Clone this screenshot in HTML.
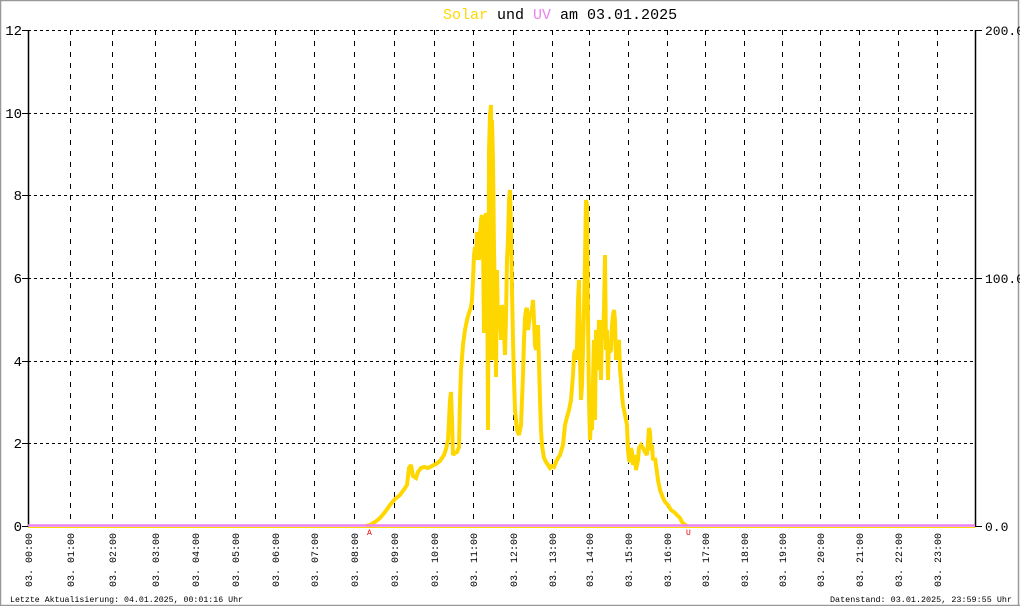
<!DOCTYPE html>
<html><head><meta charset="utf-8"><style>
html,body{margin:0;padding:0;background:#fff;width:1020px;height:606px;overflow:hidden;}
svg{display:block;}
text{font-family:"Liberation Mono",monospace;}
</style></head><body>
<svg width="1020" height="606" viewBox="0 0 1020 606" xmlns="http://www.w3.org/2000/svg">
<rect x="0" y="0" width="1020" height="606" fill="#fff"/>
<path d="M0.5 606V0.5H1018.5V606M0 605.5H1020" stroke="#999" stroke-width="1.5" fill="none"/>
<text x="443" y="19" font-size="15"><tspan fill="#FFD700">Solar</tspan><tspan fill="#000"> und </tspan><tspan fill="#EE82EE">UV</tspan><tspan fill="#000"> am 03.01.2025</tspan></text>
<g stroke="#000" stroke-width="1" stroke-dasharray="3,3" fill="none">
<path d="M28 30.5H975M28 113.5H975M28 195.5H975M28 278.5H975M28 361.5H975M28 443.5H975"/>
</g>
<g stroke="#000" stroke-width="1" stroke-dasharray="5,6" fill="none">
<path d="M70.5 30V526M112.5 30V526M155.5 30V526M195.5 30V526M235.5 30V526M275.5 30V526M314.5 30V526M354.5 30V526M394.5 30V526M434.5 30V526M473.5 30V526M513.5 30V526M552.5 30V526M589.5 30V526M628.5 30V526M667.5 30V526M705.5 30V526M744.5 30V526M782.5 30V526M820.5 30V526M859.5 30V526M898.5 30V526M937.5 30V526"/>
</g>
<path d="M28.5 30V527M975.5 30V527" stroke="#000" stroke-width="1.5"/>
<path d="M22 30.5H28M22 113.5H28M22 195.5H28M22 278.5H28M22 361.5H28M22 443.5H28M22 526.5H28M975 30.5H982M975 278.5H982M975 526.5H982" stroke="#000" stroke-width="1"/>
<g font-size="14" fill="#000" text-anchor="end">
<text x="22" y="35">12</text><text x="22" y="118">10</text><text x="22" y="200">8</text><text x="22" y="283">6</text><text x="22" y="366">4</text><text x="22" y="448">2</text><text x="22" y="531">0</text>
</g>
<g font-size="13" fill="#000">
<text x="985" y="35">200.0</text><text x="985" y="283">100.0</text><text x="985" y="531">0.0</text>
</g>
<path d="M28 527.5H975" stroke="#FFD700" stroke-width="1"/>
<polyline fill="none" stroke="#FFD700" stroke-width="4" stroke-linejoin="miter" stroke-miterlimit="2" points="366,526 370,525 375,522 380,518 385,512 390,505 395,499 400,495 405,488 407,485 409,468 411,465 413,476 416,478 418,472 421,468 424,467 428,468 432,466 436,464 440,461 444,455 446,449 448,440 449,420 450,400 451,392 452,420 453,455 455,453 457,452 459,447 460,400 461,370 463,345 465,330 467,320 469,313 471,307 472,300 473,280 474,255 475,247 476,260 477,232 478,245 479,260 480,235 481,220 482,215 483,240 484,333 485,260 486,213 487,230 488,430 489,150 490,115 491,105 492,360 492,120 493,160 494,250 495,300 496,377 497,270 498,330 499,310 500,306 501,340 502,305 503,315 504,330 505,355 506,317 507,260 508,240 509,200 510,190 511,230 512,290 513,340 514,380 515,410 517,430 519,435 521,425 522,400 523,375 524,340 525,318 526,310 527,308 528,330 530,315 532,310 533,300 534,320 535,345 536,350 538,325 540,400 541,430 542,445 544,458 546,462 548,465 550,468 552,466 554,467 556,462 558,458 560,455 563,445 565,425 567,417 569,410 571,400 573,375 574,355 575,350 576,360 577,345 578,300 579,280 580,360 581,400 582,385 583,350 584,310 585,260 586,200 587,205 588,320 589,400 590,440 591,420 592,430 593,380 594,340 595,420 596,330 597,370 598,350 599,320 600,340 601,380 602,320 603,340 604,310 605,255 606,350 607,330 608,380 609,340 610,352 611,350 612,325 613,315 614,310 615,320 616,360 617,340 618,345 619,340 620,370 621,380 622,395 623,405 624,410 626,420 627,425 628,450 629,460 630,462 631,448 632,452 633,465 635,455 636,470 638,460 639,448 641,445 643,448 645,452 647,455 648,443 649,428 650,432 651,450 652,445 653,460 655,458 656,465 658,480 660,490 663,498 665,502 668,505 671,510 674,512 677,515 680,518 682,522 684,524 687,526"/>
<path d="M28 525.5H975" stroke="#EE82EE" stroke-width="2.5"/>
<text x="367" y="535" font-size="8" fill="#e00">A</text>
<text x="686" y="535" font-size="8" fill="#e00">U</text>
<g font-size="10" fill="#000">
<text transform="translate(32,587) rotate(-90)">03. 00:00</text>
<text transform="translate(74,587) rotate(-90)">03. 01:00</text>
<text transform="translate(116,587) rotate(-90)">03. 02:00</text>
<text transform="translate(159,587) rotate(-90)">03. 03:00</text>
<text transform="translate(199,587) rotate(-90)">03. 04:00</text>
<text transform="translate(239,587) rotate(-90)">03. 05:00</text>
<text transform="translate(279,587) rotate(-90)">03. 06:00</text>
<text transform="translate(318,587) rotate(-90)">03. 07:00</text>
<text transform="translate(358,587) rotate(-90)">03. 08:00</text>
<text transform="translate(398,587) rotate(-90)">03. 09:00</text>
<text transform="translate(438,587) rotate(-90)">03. 10:00</text>
<text transform="translate(477,587) rotate(-90)">03. 11:00</text>
<text transform="translate(517,587) rotate(-90)">03. 12:00</text>
<text transform="translate(556,587) rotate(-90)">03. 13:00</text>
<text transform="translate(593,587) rotate(-90)">03. 14:00</text>
<text transform="translate(632,587) rotate(-90)">03. 15:00</text>
<text transform="translate(671,587) rotate(-90)">03. 16:00</text>
<text transform="translate(709,587) rotate(-90)">03. 17:00</text>
<text transform="translate(748,587) rotate(-90)">03. 18:00</text>
<text transform="translate(786,587) rotate(-90)">03. 19:00</text>
<text transform="translate(824,587) rotate(-90)">03. 20:00</text>
<text transform="translate(863,587) rotate(-90)">03. 21:00</text>
<text transform="translate(902,587) rotate(-90)">03. 22:00</text>
<text transform="translate(941,587) rotate(-90)">03. 23:00</text>
</g>
<text x="10" y="602" font-size="8.3" fill="#000" textLength="233" lengthAdjust="spacingAndGlyphs">Letzte Aktualisierung: 04.01.2025, 00:01:16 Uhr</text>
<text x="830" y="602" font-size="8.3" fill="#000" textLength="182" lengthAdjust="spacingAndGlyphs">Datenstand: 03.01.2025, 23:59:55 Uhr</text>
</svg>
</body></html>
